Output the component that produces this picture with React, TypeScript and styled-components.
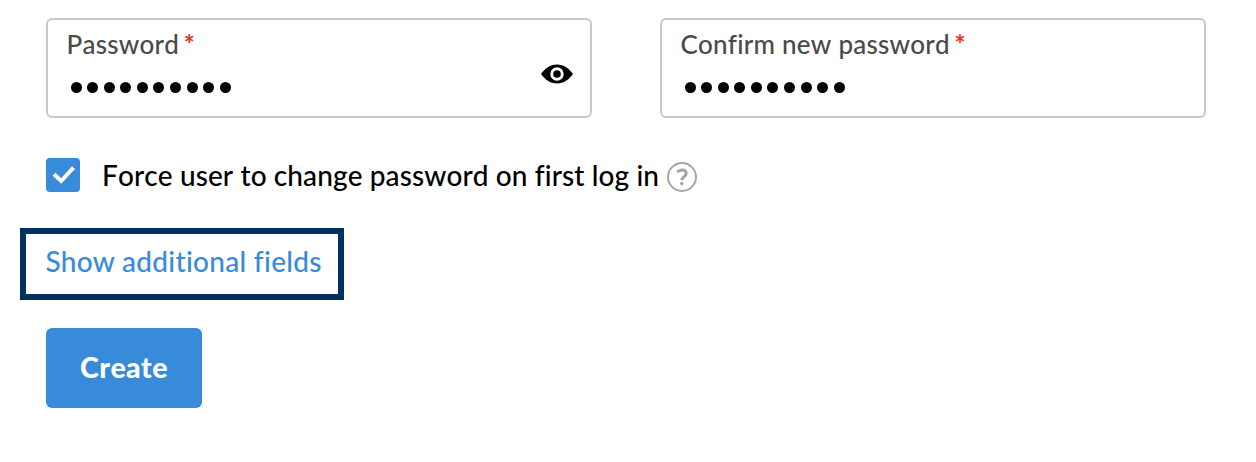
import React from "react";
import styled, { createGlobalStyle } from "styled-components";

const GlobalStyle = createGlobalStyle`
  * { box-sizing: border-box; }
  body { margin: 0; background: #fff; font-family: Lato, sans-serif; color: #000; font-variant-ligatures: none; font-kerning: none; }
`;

const Form = styled.form`
  display: flex;
  flex-direction: column;
  align-items: flex-start;
  width: 1256px;
  height: 462px;
  padding: 18px 50px 0 46px;
  overflow: hidden;
`;

const FieldRow = styled.div`
  display: flex;
  gap: 68px;
`;

const Field = styled.div`
  display: flex;
  align-items: center;
  justify-content: space-between;
  width: 546px;
  height: 100px;
  padding: 0 17px 0 18.500px;
  border: 2px solid #c8c8c8;
  border-radius: 6px;
`;

const FieldBody = styled.div`
  display: flex;
  flex-direction: column;
  height: 100%;
`;

const Label = styled.label`
  display: flex;
  gap: 4.500px;
  padding-top: 7px;
  font-size: 26px;
  font-weight: 500;
  line-height: 34px;
  letter-spacing: 0.23px;
  color: #4a4a4a;
  white-space: nowrap;
`;

const Required = styled.span`
  color: #ee3124;
  font-weight: 700;
`;

const Dots = styled.div`
  display: flex;
  gap: 5.6px;
  padding: 21px 0 0 4px;
`;

const Dot = styled.span`
  width: 11px;
  height: 11px;
  border-radius: 50%;
  background: #000;
`;

const CheckRow = styled.div`
  display: flex;
  align-items: center;
  height: 36px;
  margin-top: 39px;
`;

const Checkbox = styled.span`
  display: flex;
  width: 34px;
  height: 34px;
  border-radius: 4px;
  background: #388bd9;
`;

const CheckLabel = styled.span`
  width: 557px;
  margin: 0 7px 0 22px;
  font-size: 28px;
  font-weight: 500;
  line-height: 36px;
  letter-spacing: 0.1px;
  white-space: nowrap;
`;

const HelpIcon = styled.svg`
  margin-top: 3px;
`;

const EyeIcon = styled.svg`
  margin-top: 12px;
`;

const Highlight = styled.div`
  width: 324px;
  height: 72px;
  margin: 35px 0 0 -26px;
  padding: 9px 0 0 19.500px;
  border: 6px solid #003160;
`;

const Link = styled.a`
  display: block;
  font-size: 28px;
  font-weight: 500;
  line-height: 36px;
  font-kerning: normal;
  letter-spacing: 0.3px;
  color: #388bd9;
  white-space: nowrap;
`;

const CreateButton = styled.button`
  width: 156px;
  height: 80px;
  margin-top: 28px;
  padding: 0 0 2px;
  border: 0;
  border-radius: 6px;
  background: #388bd9;
  color: #fff;
  font: 900 28.500px/36px Lato, sans-serif;
  font-kerning: none;
  letter-spacing: 0.4px;
`;

const PasswordDots = () => (
  <Dots>
    {Array.from({ length: 10 }, (_, i) => <Dot key={i} />)}
  </Dots>
);

const Eye = () => (
  <EyeIcon width="32" height="20" viewBox="0 0 32 20">
    <path fillRule="evenodd" d="M16 .5C9 .5 4 4.500 0 10c4 5.500 9 9.500 16 9.500S28 15.500 32 10C28 4.500 23 .5 16 .5Zm0 2.800a6.700 6.700 0 1 1 0 13.400 6.700 6.700 0 0 1 0-13.400Z" />
    <circle cx="16" cy="10" r="3.800" />
  </EyeIcon>
);

export default function App() {
  return (
    <>
      <GlobalStyle />
      <Form>
        <FieldRow>
          <Field>
            <FieldBody>
              <Label>Password<Required>*</Required></Label>
              <PasswordDots />
            </FieldBody>
            <Eye />
          </Field>
          <Field>
            <FieldBody>
              <Label>Confirm new password<Required>*</Required></Label>
              <PasswordDots />
            </FieldBody>
          </Field>
        </FieldRow>
        <CheckRow>
          <Checkbox>
            <svg width="34" height="34" viewBox="0 0 34 34" fill="none" stroke="#fff" strokeWidth="4">
              <path d="m8 16.300 7.200 6.700L27.500 9.700" />
            </svg>
          </Checkbox>
          <CheckLabel>Force user to change password on first log in</CheckLabel>
          <HelpIcon width="32" height="32" viewBox="0 0 32 32" fill="none" stroke="#a6a6a6" strokeWidth="2">
            <circle cx="16" cy="16" r="14" />
            <path strokeWidth="3" d="M11.300 11.200c1.200-1.600 2.700-2.200 4.600-2.200 2.500 0 4.300 1.300 4.300 3.500 0 3.300-4.300 3-4.400 6.700" />
            <circle cx="15.800" cy="22.500" r="1.800" fill="#a6a6a6" stroke="none" />
          </HelpIcon>
        </CheckRow>
        <Highlight><Link>Show additional fields</Link></Highlight>
        <CreateButton type="button">Create</CreateButton>
      </Form>
    </>
  );
}
